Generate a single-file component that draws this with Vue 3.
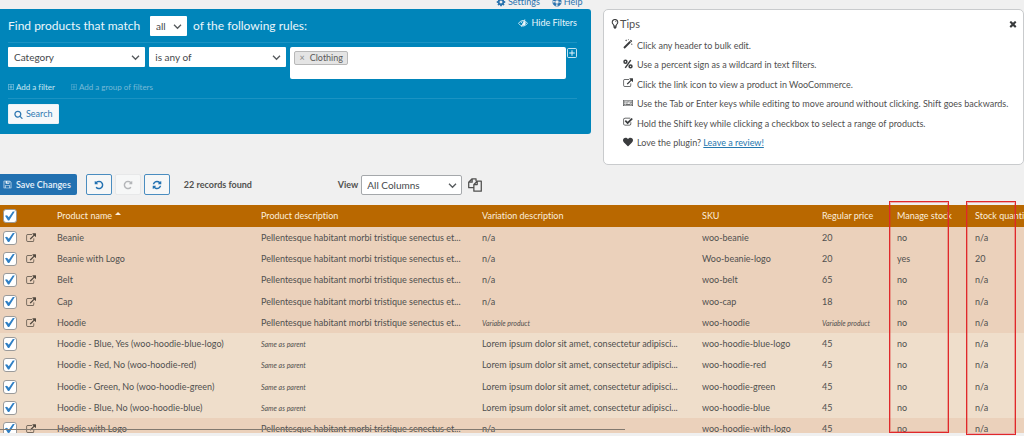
<script setup>
import { ref, computed, h } from 'vue'

const glyphs = {
  search: '<path d="M1216 832q0-185-131.5-316.5t-316.5-131.5-316.5 131.5-131.5 316.5 131.5 316.5 316.5 131.5 316.5-131.5 131.5-316.5zm512 832q0 52-38 90t-90 38q-54 0-90-38l-343-342q-179 124-399 124-143 0-273.5-55.5t-225-150-150-225-55.5-273.5 55.5-273.5 150-225 225-150 273.5-55.5 273.5 55.5 225 150 150 225 55.5 273.5q0 220-124 399l343 343q37 37 37 90z"/>',
  external: '<path d="M1472 992v320q0 119-84.5 203.5t-203.5 84.5h-832q-119 0-203.5-84.5t-84.5-203.5v-832q0-119 84.5-203.5t203.5-84.5h704q14 0 23 9t9 23v64q0 14-9 23t-23 9h-704q-66 0-113 47t-47 113v832q0 66 47 113t113 47h832q66 0 113-47t47-113v-320q0-14 9-23t23-9h64q14 0 23 9t9 23zm320-864v512q0 26-19 45t-45 19-45-19l-176-176-652 652q-10 10-23 10t-23-10l-114-114q-10-10-10-23t10-23l652-652-176-176q-19-19-19-45t19-45 45-19h512q26 0 45 19t19 45z"/>',
  heart: '<path d="M896 1664q-26 0-44-18l-624-602q-10-8-27.5-26t-55.5-65.5-68-97.5-53.5-121-23.5-138q0-220 127-344t351-124q62 0 126.5 21.5t120 58 95.5 68.5 76 68q36-36 76-68t95.5-68.5 120-58 126.5-21.5q224 0 351 124t127 344q0 221-229 450l-623 600q-18 18-44 18z"/>',
  times: '<path d="M1490 1322q0 40-28 68l-136 136q-28 28-68 28t-68-28l-294-294-294 294q-28 28-68 28t-68-28l-136-136q-28-28-28-68t28-68l294-294-294-294q-28-28-28-68t28-68l136-136q28-28 68-28t68 28l294 294 294-294q28-28 68-28t68 28l136 136q28 28 28 68t-28 68l-294 294 294 294q28 28 28 68z"/>',
  check: '<path d="M1472 930v318q0 119-84.5 203.5t-203.5 84.5h-832q-119 0-203.5-84.5t-84.5-203.5v-832q0-119 84.5-203.5t203.5-84.5h832q63 0 117 25 15 7 18 23 3 17-9 29l-49 49q-10 10-23 10-3 0-9-2-23-6-45-6h-832q-66 0-113 47t-47 113v832q0 66 47 113t113 47h832q66 0 113-47t47-113v-254q0-13 9-22l64-64q10-10 23-10 6 0 12 3 20 8 20 29zm231-489l-814 814q-24 24-57 24t-57-24l-430-430q-24-24-24-57t24-57l110-110q24-24 57-24t57 24l263 263 647-647q24-24 57-24t57 24l110 110q24 24 24 57t-24 57z"/>',
  refresh: '<path d="M1639 1056q0 5-1 7-64 268-268 434.5t-478 166.5q-146 0-282.5-55t-243.5-157l-129 129q-19 19-45 19t-45-19-19-45v-448q0-26 19-45t45-19h448q26 0 45 19t19 45-19 45l-137 137q71 66 161 102t187 36q134 0 250-65t186-179q11-17 53-117 8-23 30-23h192q13 0 22.5 9.5t9.5 22.5zm25-800v448q0 26-19 45t-45 19h-448q-26 0-45-19t-19-45 19-45l138-138q-148-137-349-137-134 0-250 65t-186 179q-11 17-53 117-8 23-30 23h-199q-13 0-22.5-9.5t-9.5-22.5v-7q65-268 270-434.5t480-166.5q146 0 284 55.5t245 156.5l130-129q19-19 45-19t45 19 19 45z"/>',
  undo: '<path d="M1664 896q0 156-61 298t-164 245-245 164-298 61q-172 0-327-72.5t-264-204.5q-7-10-6.5-22.5t8.5-20.5l137-138q10-9 25-9 16 2 23 12 73 95 179 147t225 52q104 0 198.5-40.5t163.5-109.5 109.5-163.5 40.5-198.5-40.5-198.5-109.5-163.5-163.5-109.5-198.5-40.5q-98 0-188 35.5t-160 101.5l137 138q31 30 14 69-17 40-59 40h-448q-26 0-45-19t-19-45v-448q0-42 40-59 39-17 69 14l130 129q107-101 244.5-156.5t284.5-55.5q156 0 298 61t245 164 164 245 61 298z"/>',
  redo: '<path transform="translate(1792 0) scale(-1 1)" d="M1664 896q0 156-61 298t-164 245-245 164-298 61q-172 0-327-72.5t-264-204.5q-7-10-6.5-22.5t8.5-20.5l137-138q10-9 25-9 16 2 23 12 73 95 179 147t225 52q104 0 198.5-40.5t163.5-109.5 109.5-163.5 40.5-198.5-40.5-198.5-109.5-163.5-163.5-109.5-198.5-40.5q-98 0-188 35.5t-160 101.5l137 138q31 30 14 69-17 40-59 40h-448q-26 0-45-19t-19-45v-448q0-42 40-59 39-17 69 14l130 129q107-101 244.5-156.5t284.5-55.5q156 0 298 61t245 164 164 245 61 298z"/>',
  cog: '<path d="M1152 896q0-106-75-181t-181-75-181 75-75 181 75 181 181 75 181-75 75-181zm512-109v222q0 12-8 23t-20 13l-185 28q-19 54-39 91 35 50 107 138 10 12 10 25t-9 23q-27 37-99 108t-94 71q-12 0-26-9l-138-108q-44 23-91 38-16 136-29 186-7 28-36 28h-222q-14 0-24.5-8.5t-11.5-21.5l-28-184q-49-16-90-37l-141 107q-10 9-25 9-14 0-25-11-126-114-165-168-7-10-7-23 0-12 8-23 15-21 51-66.5t54-70.5q-27-50-41-99l-183-27q-13-2-21-12.5t-8-23.5v-222q0-12 8-23t19-13l186-28q14-46 39-92-40-57-107-138-10-12-10-24 0-10 9-23 26-36 98.5-107.5t94.5-71.5q13 0 26 10l138 107q44-23 91-38 16-136 29-186 7-28 36-28h222q14 0 24.5 8.5t11.5 21.5l28 184q49 16 90 37l142-107q9-9 24-9 13 0 25 10 129 119 165 170 7 8 7 22 0 12-8 23-15 21-51 66.5t-54 70.5q26 50 41 98l183 28q13 2 21 12.5t8 23.5z"/>',
  life: '<g fill="none" stroke="currentColor"><circle cx="896" cy="896" r="560" stroke-width="400" stroke-dasharray="600 280" stroke-dashoffset="-140"/><circle cx="896" cy="896" r="770" stroke-width="100"/><circle cx="896" cy="896" r="350" stroke-width="90"/></g>',
  eye: '<path fill="none" stroke="currentColor" stroke-width="150" d="M90 950q330-500 806-500t806 500q-330 500-806 500t-806-500z"/><path d="M1000 480a430 430 0 0 1-60 860l-200-60 380-760z"/><path fill="none" stroke="currentColor" stroke-width="150" d="M1230 250L620 1560M560 900q20-220 230-300"/>',
  plus: '<path fill="none" stroke="currentColor" stroke-width="160" d="M300 80h1192q220 0 220 220v1192q0 220-220 220h-1192q-220 0-220-220v-1192q0-220 220-220z"/><path d="M810 400h172v410h410v172h-410v410h-172v-410h-410v-172h410z"/>',
  bulb: '<path fill="none" stroke="currentColor" stroke-width="190" d="M690 1250q0-210-140-330-150-140-150-350 0-220 150-350t346-130 346 130 150 350q0 210-150 350-140 120-140 330z"/><path fill="none" stroke="currentColor" stroke-width="120" d="M920 380q190 10 200 190"/><path d="M640 1280h512v280l-110 80-60 110h-172l-60-110-110-80z"/>',
  magic: '<path d="M60 1500L1180 380l240 240L300 1740zM1240 320l180-180 240 240-180 180z"/><path d="M560 60l60 140 140 60-140 60-60 140-60-140-140-60 140-60zM1580 760l50 110 110 50-110 50-50 110-50-110-110-50 110-50zM960 10l35 85 85 35-85 35-35 85-35-85-85-35 85-35z"/>',
  percent: '<path fill="none" stroke="currentColor" stroke-width="260" d="M1390 200L400 1600"/><g fill="none" stroke="currentColor" stroke-width="270"><circle cx="440" cy="480" r="260"/><circle cx="1350" cy="1320" r="260"/></g>',
  keyboard: '<path fill-rule="evenodd" d="M100 350h1592q100 0 100 100v900q0 100-100 100h-1592q-100 0-100-100v-900q0-100 100-100zm20 110v880h1552v-880z"/><path opacity=".75" d="M210 560h160v180h-160zM450 560h160v180h-160zM690 560h160v180h-160zM930 560h160v180h-160zM1170 560h160v180h-160zM1410 560h160v420h-400v-180h240zM210 820h240v180h-240zM530 820h160v180h-160zM770 820h160v180h-160zM210 1080h160v180h-160zM450 1080h860v180h-860zM1390 1080h180v180h-180z"/>',
  save: '<path fill-rule="evenodd" d="M220 128h1070q60 0 110 50l214 214q50 50 50 110v1070q0 92-92 92h-1352q-92 0-92-92v-1352q0-92 92-92zm36 128v1280h130v-420q0-92 92-92h836q92 0 92 92v420h130v-1020l-240-260h-20v400q0 92-92 92h-576q-92 0-92-92v-400zm640 0v330h200v-330zm-380 896v384h760v-384z"/>',
  copy: '<path fill="none" stroke="currentColor" stroke-width="160" stroke-linejoin="round" d="M750 1240H90v-700l440-440h500v300M530 100v440H90M1180 410h520v1280H750v-850zM1180 410v430H750"/>',
  chevron: '<path fill="none" stroke="currentColor" stroke-width="260" d="M200 560l696 690 696-690"/>',
}
const Icon = (p) => h('svg', { viewBox: '0 0 1792 1792', fill: 'currentColor', class: 'icon', 'aria-hidden': 'true', innerHTML: glyphs[p.name] })
Icon.props = ['name']

const match = ref('all')
const field = ref('Category')
const operator = ref('is any of')
const view = ref('All Columns')

const tips = [
  ['magic', 'Click any header to bulk edit.'],
  ['percent', 'Use a percent sign as a wildcard in text filters.'],
  ['external', 'Click the link icon to view a product in WooCommerce.'],
  ['keyboard', 'Use the Tab or Enter keys while editing to move around without clicking. Shift goes backwards.'],
  ['check', 'Hold the Shift key while clicking a checkbox to select a range of products.'],
]

const pell = 'Pellentesque habitant morbi tristique senectus et...'
const lorem = 'Lorem ipsum dolor sit amet, consectetur adipisci...'
const parent = 'Same as parent'
const variable = 'Variable product'
const columns = ['Product description', 'Variation description', 'SKU', 'Regular price', 'Manage stock', 'Stock quantity']
const rows = ref([
  ['Beanie', pell, 'n/a', 'woo-beanie', '20', 'no', 'n/a'],
  ['Beanie with Logo', pell, 'n/a', 'Woo-beanie-logo', '20', 'yes', '20'],
  ['Belt', pell, 'n/a', 'woo-belt', '65', 'no', 'n/a'],
  ['Cap', pell, 'n/a', 'woo-cap', '18', 'no', 'n/a'],
  ['Hoodie', pell, variable, 'woo-hoodie', variable, 'no', 'n/a'],
  ['Hoodie - Blue, Yes (woo-hoodie-blue-logo)', parent, lorem, 'woo-hoodie-blue-logo', '45', 'no', 'n/a'],
  ['Hoodie - Red, No (woo-hoodie-red)', parent, lorem, 'woo-hoodie-red', '45', 'no', 'n/a'],
  ['Hoodie - Green, No (woo-hoodie-green)', parent, lorem, 'woo-hoodie-green', '45', 'no', 'n/a'],
  ['Hoodie - Blue, No (woo-hoodie-blue)', parent, lorem, 'woo-hoodie-blue', '45', 'no', 'n/a'],
  ['Hoodie with Logo', pell, 'n/a', 'woo-hoodie-with-logo', '45', 'no', 'n/a'],
].map((cells) => ({ cells, variation: cells[1] === parent, selected: true })))
const isNote = (t) => t === parent || t === variable
const all = computed({
  get: () => rows.value.every((r) => r.selected),
  set: (v) => rows.value.forEach((r) => { r.selected = v }),
})
</script>

<template>
  <div class="page">
    <nav class="top-links">
      <a href="#settings"><Icon name="cog" />Settings</a>
      <a href="#help"><Icon name="life" />Help</a>
    </nav>

    <div class="panels">
      <form class="filters" @submit.prevent>
        <div class="filter-head">
          <label for="match">Find products that match</label>
          <span class="pick pick-small">
            <select id="match" v-model="match"><option>all</option><option>any</option></select>
            <Icon name="chevron" />
          </span>
          <span>of the following rules:</span>
          <button type="button" class="plain hide"><Icon name="eye" />Hide Filters</button>
        </div>
        <div class="rule">
          <span class="pick">
            <select v-model="field" aria-label="Field"><option>Category</option></select>
            <Icon name="chevron" />
          </span>
          <span class="pick">
            <select v-model="operator" aria-label="Operator"><option>is any of</option></select>
            <Icon name="chevron" />
          </span>
          <div class="tokens">
            <span class="token"><button type="button" class="plain" aria-label="Remove">×</button>Clothing</span>
            <input type="text" aria-label="Values" />
          </div>
          <button type="button" class="plain add" aria-label="Add rule"><Icon name="plus" /></button>
        </div>
        <div class="adders">
          <button type="button" class="plain"><Icon name="plus" />Add a filter</button>
          <button type="button" class="plain dim"><Icon name="plus" />Add a group of filters</button>
        </div>
        <div class="submit">
          <button type="submit" class="search"><Icon name="search" />Search</button>
        </div>
      </form>

      <section class="tips">
        <header>
          <h2><Icon name="bulb" />Tips</h2>
          <button type="button" class="plain" aria-label="Close"><Icon name="times" /></button>
        </header>
        <ul>
          <li v-for="t in tips" :key="t[0]"><Icon :name="t[0]" />{{ t[1] }}</li>
          <li><Icon name="heart" /><span>Love the plugin? <a href="#review">Leave a review!</a></span></li>
        </ul>
      </section>
    </div>

    <div class="toolbar">
      <button type="button" class="save"><Icon name="save" />Save Changes</button>
      <div class="history">
        <button type="button" aria-label="Undo"><Icon name="undo" /></button>
        <button type="button" aria-label="Redo" disabled><Icon name="redo" /></button>
        <button type="button" aria-label="Refresh"><Icon name="refresh" /></button>
      </div>
      <strong class="count">22 records found</strong>
      <label for="view">View</label>
      <span class="pick pick-view">
        <select id="view" v-model="view"><option>All Columns</option></select>
        <Icon name="chevron" />
      </span>
      <button type="button" class="plain copy" aria-label="Copy view"><Icon name="copy" /></button>
    </div>

    <div class="grid">
      <div class="clip">
        <table>
          <colgroup>
            <col class="c-check" /><col class="c-link" /><col class="c-name" /><col class="c-desc" /><col class="c-var" />
            <col class="c-sku" /><col class="c-price" /><col class="c-manage" /><col class="c-stock" />
          </colgroup>
          <thead>
            <tr>
              <th><input v-model="all" type="checkbox" aria-label="Select all" /></th>
              <th></th>
              <th>Product name<span class="sort"></span></th>
              <th v-for="c in columns" :key="c">{{ c }}</th>
            </tr>
          </thead>
          <tbody>
            <tr v-for="r in rows" :key="r.cells[0]" :class="{ variation: r.variation }">
              <td><input v-model="r.selected" type="checkbox" :aria-label="r.cells[0]" /></td>
              <td><a v-if="!r.variation" href="#product" class="open" aria-label="View product"><Icon name="external" /></a></td>
              <td v-for="(c, i) in r.cells" :key="i"><em v-if="isNote(c)">{{ c }}</em><template v-else>{{ c }}</template></td>
            </tr>
          </tbody>
        </table>
        <div class="scroll"></div>
      </div>
      <div class="mark mark-manage"></div>
      <div class="mark mark-stock"></div>
    </div>
  </div>
</template>

<style>
body {
  background: #f0f0f0;
  overflow: hidden;
}
</style>

<style scoped>
.page {
  display: flex;
  flex-direction: column;
  box-sizing: border-box;
  height: 100vh;
  padding-bottom: 3px;
  overflow: hidden;
  font: 9px/14px Lato, "Open Sans", sans-serif;
  font-variant-ligatures: none;
  color: #50504f;
}
.page * { box-sizing: border-box; }
.icon { width: 10px; height: 10px; flex: none; display: block; }
button, select, input { font: inherit; font-variant-ligatures: none; color: inherit; margin: 0; }
button { display: flex; align-items: center; justify-content: center; cursor: pointer; white-space: nowrap; }
.plain { border: 0; padding: 0; background: none; }

.top-links {
  display: flex;
  align-items: flex-end;
  gap: 12px;
  height: 9px;
  flex: none;
  padding-left: 496px;
}
.top-links a { display: flex; align-items: center; gap: 2px; color: #2b73ae; text-decoration: none; }

.panels {
  display: grid;
  grid-template-columns: minmax(0, 591fr) minmax(0, 421fr);
  gap: 12px;
  align-items: start;
  flex: none;
  min-height: 165px;
}
.filters {
  position: relative;
  background: #0085ba;
  color: #eaf6fb;
  border-radius: 0 3px 3px 0;
  padding: 0 14px 10px 8px;
}
.filter-head {
  display: flex;
  align-items: center;
  gap: 6px;
  height: 34px;
  border-bottom: 1px solid #1b93c3;
  font-size: 12px;
  white-space: nowrap;
}
.filter-head label { flex: 0 0 136px; }
.hide { margin-left: auto; gap: 3px; font-size: 9px; align-self: flex-start; margin-top: 7px; }
.pick { position: relative; display: flex; min-width: 0; height: 20px; }
.pick select {
  appearance: none;
  width: 100%;
  border: 0;
  border-radius: 1px;
  padding: 0 18px 0 6px;
  background: #fff;
  color: #45494c;
  font-size: 10px;
}
.pick .icon { position: absolute; right: 5px; top: 6px; width: 9px; height: 9px; color: #55595c; pointer-events: none; }
.pick-small { flex: 0 0 37px; }
.pick-small select { padding-right: 0; }

.rule {
  display: grid;
  grid-template-columns: minmax(0, 137fr) minmax(0, 137fr) minmax(0, 275fr) 7px;
  justify-items: stretch;
  align-items: start;
  gap: 4px;
  padding-top: 4px;
}
.tokens {
  display: flex;
  align-items: flex-start;
  height: 32px;
  padding: 4px;
  background: #fff;
  border-radius: 2px;
}
.tokens input { flex: 1; min-width: 0; height: 14px; border: 0; padding: 0; background: none; outline: 0; }
.token {
  display: flex;
  gap: 5px;
  height: 14px;
  line-height: 12px;
  padding: 0 4px;
  border: 1px solid #b8b8b8;
  border-radius: 2px;
  background: #e4e4e4;
  color: #5a5a5a;
}
.token button { color: #888; line-height: 12px; }
.rule .add { justify-content: flex-end; margin-top: 1px; }
.adders {
  display: flex;
  gap: 16px;
  height: 20px;
  padding-bottom: 3px;
  border-bottom: 1px solid #1b93c3;
  font-size: 8px;
}
.adders button { gap: 2px; color: #c8e5f1; }
.adders .icon { width: 6px; height: 6px; }
.adders .dim { color: #78bad7; }
.submit { padding-top: 5px; }
.search {
  gap: 3px;
  height: 20px;
  padding: 0 5px;
  border: 1px solid #e9f1f6;
  border-radius: 1px;
  background: #f5f8fa;
  color: #2f78b2;
}
.search .icon { width: 9px; height: 9px; }

.tips {
  min-height: 156px;
  padding: 6px 5px 0 6px;
  border: 1px solid #c9cbcd;
  border-radius: 5px;
  background: #fff;
}
.tips header { display: flex; justify-content: space-between; align-items: center; }
.tips h2 { display: flex; align-items: center; margin: 0; font-size: 11px; font-weight: 400; line-height: 16px; }
.tips .icon { color: #3a3c3e; }
.tips ul { list-style: none; margin: 4px 0 0; padding: 0 0 0 13px; }
.tips li { display: flex; align-items: center; gap: 4px; height: 19px; white-space: nowrap; }
.tips li:nth-child(even) { height: 20px; }
.tips li .icon { margin-bottom: 3px; }
.tips a { color: #2577ae; }

.toolbar { display: flex; align-items: center; flex: none; height: 21px; margin-bottom: 10px; font-weight: 700; }
.save {
  gap: 4px;
  height: 21px;
  padding: 0 6px 0 3px;
  border: 0;
  border-radius: 0 2px 2px 0;
  background: #2271b1;
  color: #e8f2fa;
  font-weight: 600;
}
.save .icon { width: 9px; height: 9px; }
.history { display: flex; gap: 3px; margin: 0 14px 0 9px; }
.history button {
  width: 26px;
  height: 21px;
  padding: 0;
  border: 1px solid #4a8dc0;
  border-radius: 2px;
  background: #f6f7f7;
  color: #2271b1;
}
.history button:disabled { border-color: #e7e8e9; color: #b4b6b9; }
.count { flex: 0 0 154px; font-weight: 700; }
.toolbar .pick-view { flex: 0 0 101px; margin-left: 3px; }
.pick-view select { border: 1px solid #a5a8ab; border-radius: 2px; padding-left: 5px; font-weight: 400; }
.copy { margin-left: 6px; }
.copy .icon { width: 14px; height: 14px; }

.grid { position: relative; flex: 1; min-height: 0; }
.clip { position: relative; height: 100%; overflow: hidden; }
table { width: 100%; table-layout: fixed; border-collapse: collapse; }
.c-check { width: 22px; }
.c-link { width: 35px; }
.c-name { width: 204px; }
.c-desc { width: 221px; }
.c-var { width: 220px; }
.c-sku { width: 120px; }
.c-price { width: 75px; }
.c-manage { width: 78px; }
.c-stock { width: 49px; }
th, td { padding: 0; text-align: left; white-space: nowrap; font-weight: 400; vertical-align: middle; }
thead tr { height: 22px; background: #b96800; color: #fbeedd; }
tbody tr { height: 21px; background: #ebd1bb; }
tbody tr:nth-child(4n + 3) { height: 22px; }
tbody .variation { background: #efdecb; }
td em { font-size: 7px; }
.sort {
  display: inline-block;
  margin-left: 3px;
  border: solid transparent;
  border-width: 0 3px 3px;
  border-bottom-color: #fbeedd;
  vertical-align: 4px;
}
.open { display: block; padding-left: 4px; color: #50483f; }
input[type="checkbox"] {
  appearance: none;
  display: block;
  width: 14px;
  height: 14px;
  margin-left: 3px;
  border: 1px solid #9a9a9a;
  border-radius: 3px;
  background: #fff;
}
input[type="checkbox"]:checked::before {
  content: "";
  display: block;
  width: 10px;
  height: 10px;
  margin: 1px;
  background: #2f7fc4;
  clip-path: polygon(0 48%, 20% 42%, 38% 62%, 78% 5%, 98% 5%, 42% 96%, 30% 96%);
}
.scroll { position: absolute; left: 0; bottom: 3px; width: 61%; height: 1px; background: #82796f; }
.mark { position: absolute; top: -4px; border: 1px solid #e0282a; box-shadow: inset 0 0 0 1px #e0282a55; }
.mark-manage { left: 889px; width: 60px; bottom: 0; }
.mark-stock { left: 966px; width: 50px; bottom: -2px; }
</style>
